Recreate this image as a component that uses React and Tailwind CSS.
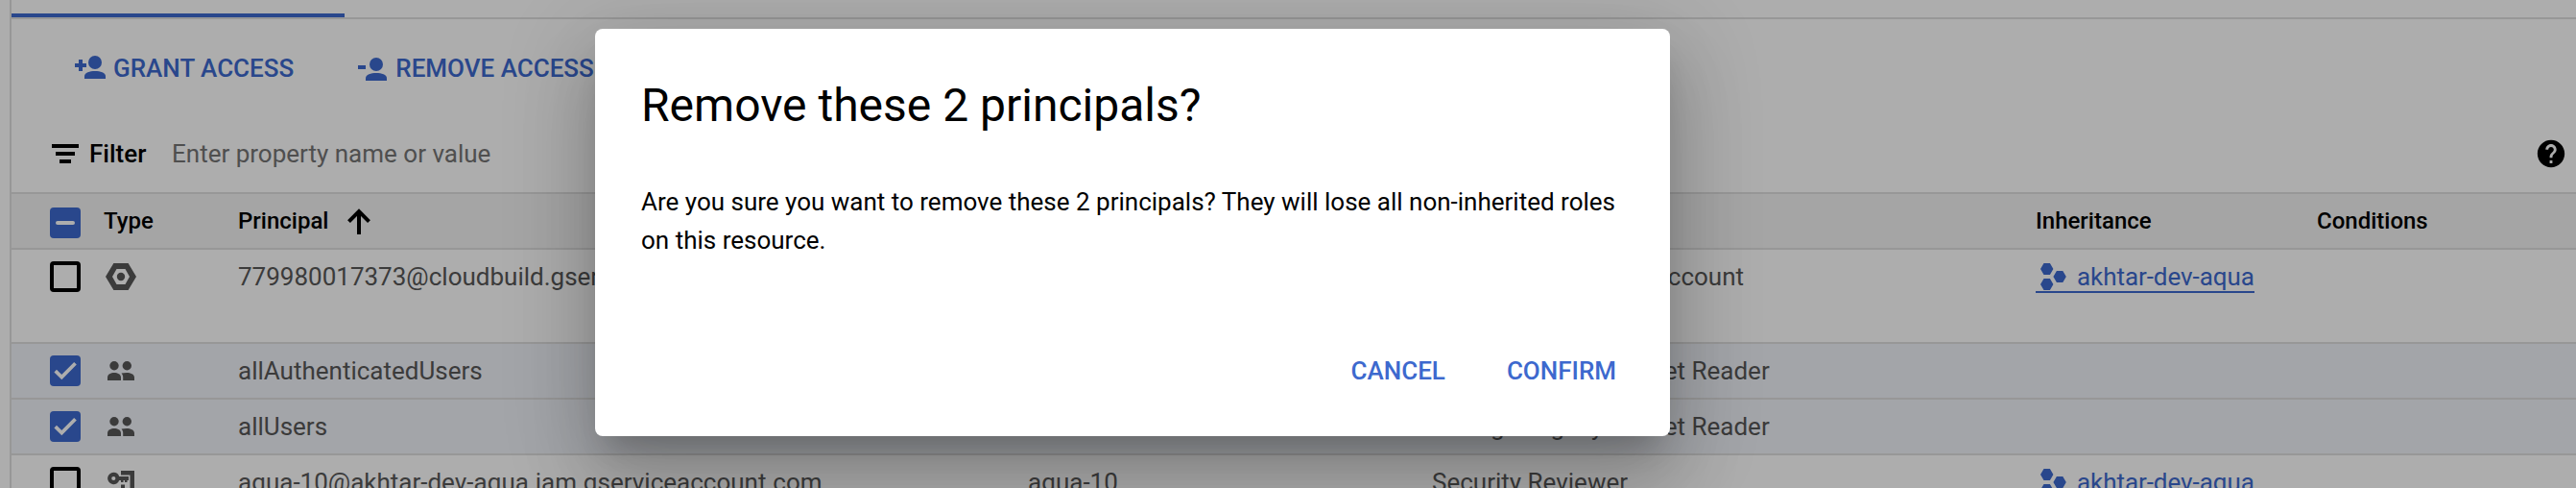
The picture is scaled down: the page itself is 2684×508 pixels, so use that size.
import React from "react";
import { MdHelp } from "react-icons/md";

const GRID =
  "grid grid-cols-[56px_140px_823px_421px_629px_293px_1fr] pl-10 border-b-2 border-[#dfdfdf]";

function GrantIcon() {
  return (
    <svg className="w-8 h-6" viewBox="0 0 32 24" fill="currentColor">
      <path d="M4 4h4v4h4v4H8v4H4v-4H0V8h4z" />
      <circle cx="21" cy="7" r="7" />
      <path d="M10 24v-2.600C10 17.600 15.500 16 21 16s11 1.600 11 5.400V24z" />
    </svg>
  );
}

function RevokeIcon() {
  return (
    <svg className="w-[30px] h-6" viewBox="0 0 30 24" fill="currentColor">
      <path d="M0 8h8v4H0z" />
      <circle cx="19" cy="7" r="7" />
      <path d="M8 24v-2.600C8 17.600 13.500 16 19 16s11 1.600 11 5.400V24z" />
    </svg>
  );
}

function FilterIcon() {
  return (
    <svg className="w-7 h-5" viewBox="0 0 28 20" fill="currentColor">
      <path d="M0 0h28v4H0zM4 8h20v4H4zM8 16h12v4H8z" />
    </svg>
  );
}

function ArrowUpIcon() {
  return (
    <svg className="w-6 h-[27px]" viewBox="0 0 24 27" fill="none" stroke="currentColor" strokeWidth="4">
      <path d="M12 27V4M1.500 13.700L12 3l10.500 10.700" />
    </svg>
  );
}

function BuildIcon() {
  return (
    <svg className="w-8 h-7 ml-0.5" viewBox="0 0 32 28">
      <path fill="currentColor" fillRule="evenodd" d="M8.400 0h15.200L32 14l-8.400 14H8.400L0 14zM11.500 6L7 14l4.500 8h9L25 14l-4.500-8z" />
      <circle cx="16" cy="14" r="4.200" fill="currentColor" />
    </svg>
  );
}

function PeopleIcon() {
  return (
    <svg className="w-7 h-5 ml-1" viewBox="0 0 28 20" fill="currentColor">
      <circle cx="7" cy="4.700" r="4.700" />
      <circle cx="20.300" cy="4.700" r="4.700" />
      <path d="M0 20v-3.200C0 13.600 3.500 12 7 12s7 1.600 7 4.800V20z" />
      <path d="M16.200 20v-3.200c0-1.700-.6-3-1.700-4.200 1.500-.4 3.500-.6 5.500-.6 4 0 8 1.600 8 4.800V20z" />
    </svg>
  );
}

function ServiceKeyIcon() {
  return (
    <svg className="w-7 h-6 ml-1" viewBox="0 0 28 24" fill="currentColor">
      <path d="M14 0h14v24H14v-9.500h4V20h5.500V4.500H14z" />
      <path
        fillRule="evenodd"
        d="M6.300 1.800a6.200 6.200 0 1 0 5.900 8.200H14v2h2.500v-2H18v2h2.500v-2H22V6H12.200a6.200 6.200 0 0 0-5.900-4.200zm0 4.100a2.100 2.100 0 1 1 0 4.200 2.100 2.100 0 0 1 0-4.200z"
      />
    </svg>
  );
}

function OrgIcon() {
  return (
    <svg className="w-[27px] h-7 ml-[5px] mr-[11px]" viewBox="0 0 27 28" fill="currentColor">
      <path d="M3.500 0h6.400l3.500 6-3.500 6H3.500L0 6zM3.500 16h6.400l3.500 6-3.500 6H3.500L0 22zM16.900 8h6.400l3.500 6-3.500 6h-6.400l-3.500-6z" />
    </svg>
  );
}

function Checkbox({ state }) {
  if (state === "empty") {
    return <span className="block w-8 h-8 rounded border-4 border-black" />;
  }
  return (
    <svg className="w-8 h-8 rounded bg-[#3d69ce]" viewBox="0 0 32 32" fill="white">
      {state === "mixed" ? (
        <rect x="6" y="14" width="20" height="4" rx="2" />
      ) : (
        <path d="M5.700 16.200L12.300 22.600L26.500 8.300" fill="none" stroke="white" strokeWidth="3.700" />
      )}
    </svg>
  );
}

const ROWS = [
  { check: "empty", Icon: BuildIcon, principal: "779980017373@cloudbuild.gserviceaccount.com", name: "", role: "Cloud Build Service Account", link: true, tall: true },
  { check: "checked", Icon: PeopleIcon, principal: "allAuthenticatedUsers", name: "", role: "Storage Legacy Bucket Reader" },
  { check: "checked", Icon: PeopleIcon, principal: "allUsers", name: "", role: "Storage Legacy Bucket Reader" },
  { check: "empty", Icon: ServiceKeyIcon, principal: "aqua-10@akhtar-dev-aqua.iam.gserviceaccount.com", name: "aqua-10", role: "Security Reviewer", link: true },
];

function Row({ check, Icon, principal, name, role, link, tall }) {
  return (
    <div className={`${GRID} ${tall ? "pb-10" : ""} ${check === "checked" ? "bg-[#f1f3fa]" : ""}`}>
      <div className="flex items-center h-14"><Checkbox state={check} /></div>
      <div className="flex items-center h-14"><Icon /></div>
      <div className="flex items-center h-14">{principal}</div>
      <div className="flex items-center h-14">{name}</div>
      <div className="flex items-center h-14">{role}</div>
      <div className="flex items-center h-14">
        {link && (
          <a className="flex items-center h-8 mt-0.5 border-b-2 border-[#3d69ce] text-[#3d69ce] tracking-[-0.06px]">
            <OrgIcon />
            akhtar-dev-aqua
          </a>
        )}
      </div>
    </div>
  );
}

export default function App() {
  return (
    <div className="relative w-[2684px] h-[508px] overflow-hidden bg-white font-['Roboto',sans-serif] text-[26px] leading-10 whitespace-nowrap text-black">
      <div className="ml-2.5 border-l-2 border-[#dfdfdf] h-[508px] overflow-hidden">
        <div className="h-5 border-b-2 border-[#dfdfdf] flex items-end">
          <div className="w-[347px] h-1 bg-[#3d69ce]" />
        </div>
        <div className="h-[102px] flex items-center pl-[66px] font-medium text-[#3d69ce]">
          <div className="flex items-center">
            <span className="pb-0.5 mr-2"><GrantIcon /></span>
            <span>GRANT ACCESS</span>
          </div>
          <div className="flex items-center ml-[67px]">
            <span className="pt-0.5 mr-[9px]"><RevokeIcon /></span>
            <span>REMOVE ACCESS</span>
          </div>
        </div>
        <div className="h-20 pb-0.5 border-b-2 border-[#dfdfdf] flex items-center pl-[42px] pr-[9px]">
          <FilterIcon />
          <span className="font-medium ml-[11px] w-[86px]">Filter</span>
          <span className="text-[#757575]">Enter property name or value</span>
          <MdHelp className="ml-auto w-[34px] h-[34px]" />
        </div>
        <div className={`${GRID} bg-[#f3f3f3] font-medium text-2xl`}>
          <div className="flex items-center h-14 pt-1"><Checkbox state="mixed" /></div>
          <div className="flex items-center h-14">Type</div>
          <div className="flex items-center h-14">Principal<span className="ml-5"><ArrowUpIcon /></span></div>
          <div className="flex items-center h-14" />
          <div className="flex items-center h-14" />
          <div className="flex items-center h-14">Inheritance</div>
          <div className="flex items-center h-14">Conditions</div>
        </div>
        <div className="text-[#585858]">
          {ROWS.map((row) => (
            <Row key={row.principal} {...row} />
          ))}
        </div>
      </div>

      <div className="absolute inset-0 bg-black/32" />
      <div className="absolute left-[620px] top-[30px] w-[1120px] h-[424px] rounded-lg bg-white px-12 pt-12 shadow-[0_22px_30px_-14px_rgba(0,0,0,0.2),0_48px_76px_6px_rgba(0,0,0,0.14),0_18px_92px_16px_rgba(0,0,0,0.12)]">
        <h1 className="text-5xl leading-[64px]">Remove these 2 principals?</h1>
        <p className="mt-12 whitespace-normal">
          Are you sure you want to remove these 2 principals? They will lose all non-inherited roles on this resource.
        </p>
        <div className="mt-20 -mr-2 h-[72px] flex items-center justify-end gap-8 font-medium text-[#3d69ce]">
          <button className="px-4">CANCEL</button>
          <button className="px-4">CONFIRM</button>
        </div>
      </div>
    </div>
  );
}
